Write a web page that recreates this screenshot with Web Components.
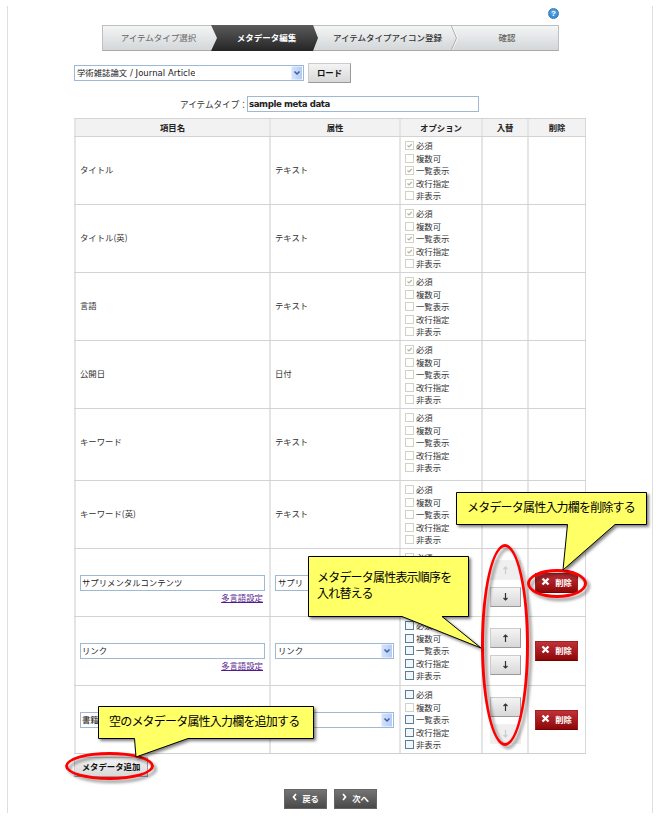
<!DOCTYPE html>
<html lang="ja">
<head>
<meta charset="utf-8">
<title>メタデータ編集</title>
<style>
html,body{margin:0;background:#fff}
body{width:658px;height:819px;overflow:hidden;font-family:"Noto Sans CJK JP",sans-serif;font-size:8.4px;color:#333}
</style>
</head>
<body>
<item-type-page></item-type-page>
<script>
const define=(name,html)=>customElements.define(name,class extends HTMLElement{
  connectedCallback(){
    if(this.shadowRoot)return;
    const root=this.attachShadow({mode:'open'});
    root.innerHTML='<style>*{box-sizing:border-box}</style>'+(typeof html==='function'?html(this):html);
  }
});

define('wizard-steps',`<style>
:host{display:block;position:relative;width:457px;height:26px;box-sizing:border-box;border:1px solid #bcc0c1;border-bottom-color:#aaa;background:linear-gradient(#f4f5f5,#d3d7d9);line-height:23px;font-size:8.5px}
svg{position:absolute;left:-1px;top:-1px}
.row{display:grid;grid-template-columns:111px 105px 137px 102px;text-align:center;position:relative;color:#666;height:24px}
.on{color:#fff;font-weight:700}.next{color:#333;font-weight:500}.last{font-weight:500}
</style>
<svg width="457" height="26"><defs><linearGradient id="g" x2="0" y2="1"><stop stop-color="#5b5b5b"/><stop offset="1" stop-color="#252525"/></linearGradient></defs>
<path d="M109 0H211L216 13L211 26H109L115 13Z" fill="url(#g)"/><path d="M349.500 1L354.500 13L349.500 25" fill="none" stroke="#aaa"/><path d="M350.500 1L355.500 13L350.500 25" fill="none" stroke="#fff" stroke-width=".6"/></svg>
<div class="row"><span>アイテムタイプ選択</span><span class="on">メタデータ編集</span><span class="next">アイテムタイプアイコン登録</span><span class="last">確認</span></div>`);

define('help-icon',`<style>:host{display:block;width:11px;height:11px;box-sizing:border-box;border:1px solid #3479bd;border-radius:50%;background:radial-gradient(circle at 50% 35%,#5aa9e6,#2b7fc9);color:#fff;font:700 8px/9px "Liberation Sans",sans-serif;text-align:center}</style><slot></slot>`);

define('text-field',`<style>:host{display:flex;align-items:center;box-sizing:border-box;height:16px;border:1px solid #9fb9d3;background:#fff;color:#222;padding:0 0 2px 1px;white-space:nowrap;overflow:hidden;line-height:14px}</style><slot></slot>`);

define('select-box',`<style>
:host{display:flex;justify-content:space-between;box-sizing:border-box;height:16px;border:1px solid #9fb9d3;background:#fff;color:#222;white-space:nowrap;line-height:13px;padding-left:2px}
span{min-width:0;overflow:hidden}
svg{flex:none}
</style><span><slot></slot></span><svg width="12" height="14"><defs><linearGradient id="b"><stop stop-color="#d5e3fd"/><stop offset="1" stop-color="#b3ccf8"/></linearGradient></defs><rect x=".5" y=".5" width="10.500" height="13" fill="url(#b)"/><path d="M3.500 5.500L6 8L8.500 5.500" fill="none" stroke="#42608f" stroke-width="1.500"/></svg>`);

define('ui-button',`<style>
:host{display:flex;align-items:center;justify-content:center;box-sizing:border-box;width:43px;height:20px;border:1px solid #ccc;border-right-color:#999;border-bottom-color:#999;background:linear-gradient(#f4f4f4,#d8d8d8);color:#111;font-weight:700;line-height:18px;padding-bottom:2px;white-space:nowrap}
:host([kind=arrow]){width:31px;height:20px;color:#333}
:host([kind=arrow][off]){border-color:#f1f1f1;background:#efefef;color:#ccc}
:host([kind=delete]){border:1px solid #a32020;border-bottom-color:#740000;background:linear-gradient(#c03138,#8e0808);color:#fff;gap:5px}
:host([kind=nav]){border:1px solid #666;background:linear-gradient(#737473,#484948);color:#fff;gap:5px;height:20px}
</style><slot name="icon"></slot><slot></slot>`);

define('option-list',host=>{
  const names=['必須','複数可','一覧表示','改行指定','非表示'];
  const state=host.getAttribute('state');
  return `<style>
:host{display:block;padding:2.3px 0 0 4px}
div{display:flex;align-items:center;height:12.4px;gap:2px;line-height:12px;white-space:nowrap}
svg{flex:none;margin-top:1px}
</style>`+[...state].map((s,i)=>`<div><svg width="9" height="9"><rect x=".5" y=".5" width="8" height="8" fill="${s==='e'?'#f3f5f6':'#fff'}" stroke="${s==='e'?'#557f9f':'#d2d1c4'}"/>${s==='c'?'<path d="M2.500 4.500L4 6L6.800 3" fill="none" stroke="#b3b2a4" stroke-width="1.200"/>':''}</svg><span>${names[i]}</span></div>`).join('');
});

define('meta-row',`<style>
:host{display:grid;grid-template-columns:195px 130px 82px 46px 59px;box-sizing:border-box;height:68px;border-top:1px solid #d3d3d3;width:512px}
:host([head]){height:18px;background:#f2f2f2;font-weight:700;text-align:center;line-height:16px;color:#222}
.c{border-left:2px solid #e5e5e5;min-width:0;height:100%}
.c:first-child{border-left:1px solid #d0d0d0}
.c:last-child{border-right:1px solid #d8d8d8}
.v{padding-left:4px;line-height:65px}
.v:nth-child(2){padding-left:4px}
:host([head]) .v{padding:0;line-height:16px}
:host([edit]) .v{line-height:14px;padding-top:26px}
:host([tall]){height:72px}
</style><div class="c v"><slot name="name"></slot></div><div class="c v"><slot name="attr"></slot></div><div class="c"><slot name="opt"></slot></div><div class="c"><slot name="order"></slot></div><div class="c"><slot name="del"></slot></div>`);

define('name-editor',host=>`<style>
:host{display:flex;flex-direction:column;width:185px}
a{align-self:flex-end;color:#551a8b;text-decoration:underline;line-height:12px;margin:0 2px 0 0}
</style><text-field><slot></slot></text-field>${host.hasAttribute('plain')?'':'<a>多言語設定</a>'}`);

define('arrow-icon',host=>`<style>:host{display:block;height:8px;margin-top:2px}svg{display:block}</style><svg width="7" height="8"><path d="${host.getAttribute('dir')==='up'?'M3.500 8V1M1.500 3L3.500 1L5.500 3':'M3.500 0V7M1.500 5L3.500 7L5.500 5'}" fill="none" stroke="currentColor" stroke-width="1.200"/></svg>`);

define('order-buttons',host=>`<style>:host{display:flex;flex-direction:column;gap:7px;padding:11px 0 0 7px}</style>
<ui-button kind="arrow" ${host.hasAttribute('first')?'off':''}><arrow-icon dir="up"></arrow-icon></ui-button><ui-button kind="arrow" ${host.hasAttribute('final')?'off':''}><arrow-icon dir="down"></arrow-icon></ui-button>`);

define('delete-button',`<style>:host{display:block;padding:24px 0 0 6px}</style>
<ui-button kind="delete"><svg slot="icon" width="9" height="9" viewBox="0 0 9 9" style="margin-top:-1px"><path d="M1.500 1.500L7.500 7.500M7.500 1.500L1.500 7.500" stroke="#fff" stroke-width="2.300"/></svg>削除</ui-button>`);

define('meta-table',()=>{
  const fixed=[['タイトル','テキスト','cnccn'],['タイトル(英)','テキスト','cnccn'],['言語','テキスト','cnnnn'],['公開日','日付','cnnnn'],['キーワード','テキスト','nnnnn'],['キーワード(英)','テキスト','nnnnn']];
  const edit=[['サプリメンタルコンテンツ','サプリ','n','first',68,''],['リンク','リンク','eeeee','',69,''],['書籍','','eneee','final',68,'plain']];
  return `<style>:host{display:block;width:512px;border-bottom:1px solid #d0d0d0}select-box{width:119px;overflow:hidden}</style>
<meta-row head><span slot="name">項目名</span><span slot="attr">属性</span><span slot="opt">オプション</span><span slot="order">入替</span><span slot="del">削除</span></meta-row>`
  +fixed.map((r,i)=>`<meta-row ${i===4?'tall':''}><span slot="name">${r[0]}</span><span slot="attr">${r[1]}</span><option-list slot="opt" state="${r[2]}"></option-list></meta-row>`).join('')
  +edit.map(r=>`<meta-row edit style="height:${r[4]}px"><name-editor slot="name" ${r[5]}>${r[0]}</name-editor><select-box slot="attr">${r[1]}</select-box><option-list slot="opt" state="${r[2]}"></option-list><order-buttons slot="order" ${r[3]}></order-buttons><delete-button slot="del"></delete-button></meta-row>`).join('');
});

/* tail: base left x, tip x, tip y, base right x */
define('note-callout',host=>{
  const w=+host.getAttribute('w'),h=+host.getAttribute('h'),[l,tx,ty,r]=host.getAttribute('tail').split(' ').map(Number);
  return `<style>
:host{position:absolute;width:${w}px;height:${h}px;font-size:12px;letter-spacing:-.8px;line-height:16px;color:#000;white-space:nowrap}
svg{position:absolute;left:0;top:0;overflow:visible;filter:drop-shadow(2px 2px 1.500px rgba(0,0,0,.5))}
div{position:relative;padding:7px 0 0 11px}
:host([lines]) div{padding:13px 0 0 9px}
</style><svg width="${w}" height="${h}"><path d="M.5 .5H${w-.5}V${h-.5}H${r}L${tx} ${ty}L${l} ${h-.5}H.5Z" fill="#ff6" stroke="#000" stroke-width="1"/></svg><div><slot></slot></div>`;
});

define('focus-ring',`<style>
:host{position:absolute;box-sizing:border-box;border:3px solid #f00;border-radius:50%;filter:drop-shadow(3px 3px 1.500px rgba(0,0,0,.4))}
</style>`);

define('item-type-page',`<style>
:host{display:block;position:relative;width:658px;height:819px}
.frame{display:flex;flex-direction:column;margin:0 5px 0 7px;height:813px;border:solid #dedede;border-width:0 1px;clip-path:inset(6px 0 0 0);padding:0 0 0 66px}
help-icon{margin:8px 0 1px 474px}
wizard-steps{margin:5px 0 0 28px}
.load{display:flex;gap:4px;margin-top:12px}
.load select-box{width:230px;margin-top:2px}
.type{display:flex;align-items:center;margin:13px 0 0 106px;line-height:15px;height:16px;font-size:8.6px;white-space:nowrap}
.type span{width:67px}
.type text-field{width:232px;font:700 8.600px/14px "DejaVu Sans",sans-serif;letter-spacing:-.4px;padding-bottom:1px}
.en{font-family:"DejaVu Sans",sans-serif;font-size:8.500px;letter-spacing:.03px}
meta-table{margin-top:6px}
.add{margin-top:3px;width:74px}
.nav{display:flex;gap:7px;margin:12px 0 0 210px}
</style>
<div class="frame">
<help-icon>?</help-icon>
<wizard-steps></wizard-steps>
<div class="load"><select-box>学術雑誌論文<span class="en"> / Journal Article</span></select-box><ui-button>ロード</ui-button></div>
<div class="type"><span>アイテムタイプ：</span><text-field>sample meta data</text-field></div>
<meta-table></meta-table>
<ui-button class="add">メタデータ追加</ui-button>
<div class="nav"><ui-button kind="nav"><svg slot="icon" width="5" height="8" style="margin-top:-3px"><path d="M4 1L1.500 4L4 7" fill="none" stroke="#fff" stroke-width="1.700"/></svg>戻る</ui-button><ui-button kind="nav"><svg slot="icon" width="5" height="8" style="margin-top:-3px"><path d="M1 1L3.500 4L1 7" fill="none" stroke="#fff" stroke-width="1.700"/></svg>次へ</ui-button></div>
</div>
<focus-ring style="left:481px;top:544px;width:48px;height:202px"></focus-ring>
<focus-ring style="left:527px;top:569px;width:60px;height:29px"></focus-ring>
<focus-ring style="left:65px;top:752px;width:89px;height:28px"></focus-ring>
<note-callout w="191" h="33" tail="111.500 107 78 159" style="left:456px;top:492px">メタデータ属性入力欄を削除する</note-callout>
<note-callout lines w="161" h="61" tail="94 173 92 134" style="left:308px;top:556px">メタデータ属性表示順序を<br>入れ替える</note-callout>
<note-callout w="216" h="33" tail="36.500 38 51 90" style="left:98px;top:706px">空のメタデータ属性入力欄を追加する</note-callout>`);
</script>
</body>
</html>
